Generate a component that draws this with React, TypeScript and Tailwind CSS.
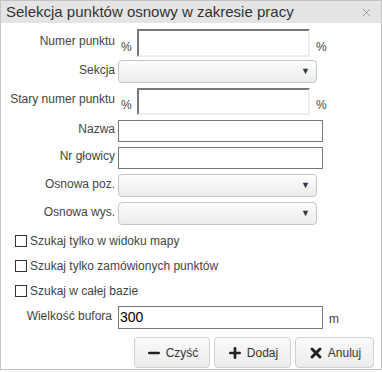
import { Minus, Plus, X } from 'lucide-react';

const label = 'w-[117px] shrink-0 pr-[3px] text-right text-[12px] text-[#444]';

function Select() {
  return (
    <div className="w-[199px] h-[23px] rounded-[4px] border border-[#c5c5c5] bg-gradient-to-b from-[#fdfdfd] to-[#ececec] flex items-center justify-end pr-[6px]">
      <span className="text-[9px] text-[#333] leading-none">▼</span>
    </div>
  );
}

function Check({ text }: { text: string }) {
  return (
    <div className="flex items-center h-[25px] pl-[14px]">
      <div className="w-[12px] h-[12px] border border-[#333] bg-white" />
      <span className="ml-[3px] text-[12px] text-[#444]">{text}</span>
    </div>
  );
}

export default function App() {
  return (
    <div className="w-[382px] h-[370px] border border-[#c4c4c4] bg-white" style={{ fontFamily: '"Liberation Sans", Arial, sans-serif' }}>
      {/* Title bar */}
      <div className="h-[22px] bg-[#e4e4e4] flex items-center justify-between pl-[5px] pr-[8px]">
        <span className="text-[15px] text-[#333]">Selekcja punktów osnowy w zakresie pracy</span>
        <X size={13} strokeWidth={1.5} className="text-[#888]" />
      </div>

      <div className="pt-[6px]">
        {/* Numer punktu */}
        <div className="flex items-start h-[28px]">
          <div className={label + ' pt-[3px]'}>Numer punktu</div>
          <span className="ml-[3px] mt-[9px] w-[16px] text-[12px] text-[#444]">%</span>
          <div className="w-[173px] h-[28px] border-2 border-t-[#777] border-l-[#777] border-r-[#eee] border-b-[#eee] bg-white" />
          <span className="ml-[6px] mt-[9px] text-[12px] text-[#444]">%</span>
        </div>

        {/* Sekcja */}
        <div className="flex items-center mt-[3px] h-[23px]">
          <div className={label + ' -mt-[4px]'}>Sekcja</div>
          <Select />
        </div>

        {/* Stary numer punktu */}
        <div className="flex items-start mt-[5px] h-[27px]">
          <div className={label + ' pt-[2px]'}>Stary numer punktu</div>
          <span className="ml-[3px] mt-[8px] w-[16px] text-[12px] text-[#444]">%</span>
          <div className="w-[173px] h-[27px] border-2 border-t-[#777] border-l-[#777] border-r-[#eee] border-b-[#eee] bg-white" />
          <span className="ml-[6px] mt-[8px] text-[12px] text-[#444]">%</span>
        </div>

        {/* Nazwa */}
        <div className="flex items-center mt-[5px] h-[22px]">
          <div className={label + ' -mt-[4px]'}>Nazwa</div>
          <div className="w-[205px] h-[22px] border border-[#777] bg-white" />
        </div>

        {/* Nr głowicy */}
        <div className="flex items-center mt-[5px] h-[22px]">
          <div className={label + ' -mt-[4px]'}>Nr głowicy</div>
          <div className="w-[205px] h-[22px] border border-[#777] bg-white" />
        </div>

        {/* Osnowa poz. */}
        <div className="flex items-center mt-[5px] h-[23px]">
          <div className={label + ' -mt-[4px]'}>Osnowa poz.</div>
          <Select />
        </div>

        {/* Osnowa wys. */}
        <div className="flex items-center mt-[5px] h-[23px]">
          <div className={label + ' -mt-[4px]'}>Osnowa wys.</div>
          <Select />
        </div>

        <div className="mt-[3px]">
          <Check text="Szukaj tylko w widoku mapy" />
          <Check text="Szukaj tylko zamówionych punktów" />
          <Check text="Szukaj w całej bazie" />
        </div>

        {/* Wielkość bufora */}
        <div className="flex items-center mt-[3px] h-[23px]">
          <div className={label + ' -mt-[4px] pr-[6px]'}>Wielkość bufora</div>
          <div className="w-[205px] h-[23px] border border-[#777] bg-white flex items-center pl-[1px] text-[14px] text-black">300</div>
          <span className="ml-[6px] mt-[3px] text-[12px] text-[#444]">m</span>
        </div>

        {/* Buttons */}
        <div className="flex justify-end gap-[4px] pr-[7px] mt-[8px]">
          <button className="w-[76px] h-[31px] rounded-[4px] border border-[#d0d0d0] bg-gradient-to-b from-[#fafafa] to-[#ececec] flex items-center justify-center gap-[4px] text-[12px] text-[#333]">
            <Minus size={16} strokeWidth={4} className="text-[#222]" />
            Czyść
          </button>
          <button className="w-[77px] h-[31px] rounded-[4px] border border-[#d0d0d0] bg-gradient-to-b from-[#fafafa] to-[#ececec] flex items-center justify-center gap-[4px] text-[12px] text-[#333]">
            <Plus size={16} strokeWidth={4} className="text-[#222]" />
            Dodaj
          </button>
          <button className="w-[79px] h-[31px] rounded-[4px] border border-[#d0d0d0] bg-gradient-to-b from-[#fafafa] to-[#ececec] flex items-center justify-center gap-[4px] text-[12px] text-[#333]">
            <X size={16} strokeWidth={4.5} className="text-[#222]" />
            Anuluj
          </button>
        </div>
      </div>
    </div>
  );
}
